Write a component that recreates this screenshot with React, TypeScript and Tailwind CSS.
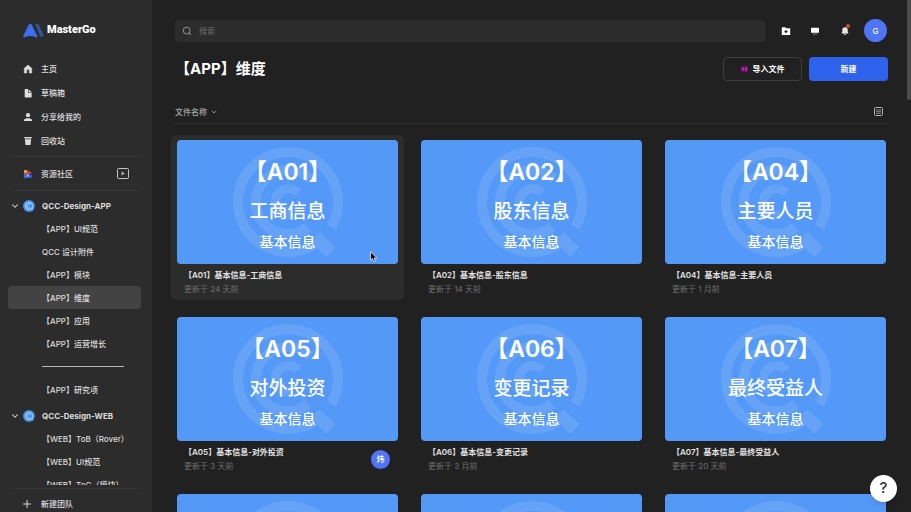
import React from "react";
import { ChevronDown, Plus, Search } from "lucide-react";

interface FileItem {
    code: string;
    name: string;
    updated: string;
    owner?: string;
    active?: boolean;
}

const files: FileItem[] = [
    { code: "A01", name: "工商信息", updated: "24 天前", active: true },
    { code: "A02", name: "股东信息", updated: "14 天前" },
    { code: "A04", name: "主要人员", updated: "1 月前" },
    { code: "A05", name: "对外投资", updated: "3 天前", owner: "炜" },
    { code: "A06", name: "变更记录", updated: "3 月前" },
    { code: "A07", name: "最终受益人", updated: "20 天前" },
];

// "-" renders as a separator line in the project list
const appProjects = ["【APP】UI规范", "QCC 设计附件", "【APP】模块", "【APP】维度", "【APP】应用", "【APP】运营增长", "-", "【APP】研究项"];
const webProjects = ["【WEB】ToB（Rover）", "【WEB】UI规范", "【WEB】ToC（模块）"];

const HomeIcon = () => (
    <svg viewBox="0 0 10 10" className="w-[10px] h-[10px]" fill="currentColor">
        <path d="M5 1 8.700 4.300V9H6.300V6.500A1.300 1.300 0 0 0 3.700 6.500V9H1.300V4.300Z" stroke="currentColor" strokeWidth=".6" strokeLinejoin="round" />
    </svg>
);

const DraftIcon = () => (
    <svg viewBox="0 0 10 10" className="w-[10px] h-[10px]" fill="currentColor">
        <path d="M2.200 1H5v3.600h3.700V9a.4.4 0 0 1-.4.4H2.200A.5.5 0 0 1 1.700 9V1.500a.5.5 0 0 1 .5-.5Z" />
        <path d="M5.600 1.200 8.500 4H5.600Z" />
    </svg>
);

const ShareIcon = () => (
    <svg viewBox="0 0 10 10" className="w-[10px] h-[10px]" fill="currentColor">
        <circle cx="5" cy="3.200" r="2.100" />
        <path d="M1 9V7.900C1 6.700 3.200 6.200 5 6.200s4 .5 4 1.700V9Z" />
    </svg>
);

const TrashIcon = () => (
    <svg viewBox="0 0 10 10" className="w-[10px] h-[10px]" fill="currentColor">
        <path d="M1.300 1h7.400v1.500H1.300Z" />
        <path d="M1.900 3.200h6.200L7.500 9H2.500Z" />
    </svg>
);

const CommunityIcon = () => (
    <svg viewBox="0 0 10 10" className="w-[10px] h-[10px]">
        <path d="M1 1h3.500v3.500H1Z" fill="#f0954a" />
        <path d="M3.500 1.500 8 3v3H4Z" fill="#e2452f" />
        <path d="M.8 5h3.500v4H.8Z" fill="#3f6df2" />
        <path d="M4.300 6.500A2.300 2.300 0 0 1 9 6.500V9H4.300Z" fill="#2853d8" />
        <path d="M4 4.500 7 7.500H4Z" fill="#f5b37a" />
    </svg>
);

const nav = [
    { label: "主页", icon: HomeIcon },
    { label: "草稿箱", icon: DraftIcon },
    { label: "分享给我的", icon: ShareIcon },
    { label: "回收站", icon: TrashIcon },
];

function Logo() {
    return (
        <a href="#" className="flex items-center gap-[2px] h-5">
            <svg viewBox="0 0 22 15" className="w-[22px] h-[15px]">
                <path d="M12.300 1.500C13 .4 15 .5 15.800 1.800L20.300 11.500c.7 1.800-1.500 2.900-3.200 1.700Z" fill="#2f569b" />
                <path d="M5.800 1.500C6.500.4 8 .4 8.700 1.500L14.300 13c.5 1-.4 1.700-1.400 1.300C9 12.600 5.600 12.600 1.700 14.300.7 14.700-.2 14 .3 13Z" fill="#3b6ff0" />
            </svg>
            <span className="text-[11px] leading-5 font-black text-white font-['Roboto',sans-serif]">MasterGo</span>
        </a>
    );
}

function TeamMark() {
    return (
        <svg viewBox="0 0 12 12" className="w-3 h-3 shrink-0">
            <circle cx="6" cy="6" r="6" fill="#3f8df0" />
            <circle cx="6" cy="6" r="3.700" fill="none" stroke="#b9d8ff" strokeWidth="1" />
            <path d="M7.500 4.700A2 2 0 1 0 7 7.800" fill="none" stroke="#d6e8ff" strokeWidth=".8" />
            <path d="m7.800 7.800 1.800 1.800" stroke="#b9d8ff" strokeWidth="1" />
        </svg>
    );
}

function Team({ name, projects, current }: { name: string; projects: string[]; current?: string }) {
    return (
        <section className="pt-1">
            <button className="flex items-center w-full h-[22px] pl-[10px]">
                <ChevronDown className="w-[10px] h-[10px] mr-[3px]" strokeWidth={2.500} />
                <TeamMark />
                <span className="ml-[7px] font-bold">{name}</span>
            </button>
            <ul>
                {projects.map((p) => (
                    <li key={p} className="h-[23px] pl-2 pr-[11px]">
                        {p === "-" ? (
                            <div className="flex items-center h-full pl-[34px]">
                                <hr className="w-[82px] border-[#b9b9b9]" />
                            </div>
                        ) : (
                            <a
                                href="#"
                                className={`flex items-center h-full pl-[34px] rounded whitespace-nowrap ${p === current ? "bg-[#434343]" : ""}`}
                            >
                                {p}
                            </a>
                        )}
                    </li>
                ))}
            </ul>
        </section>
    );
}

function Sidebar() {
    return (
        <aside className="flex flex-col w-[152px] shrink-0 bg-[#2c2c2c] text-[8px] font-medium text-[#dcdcdc]">
            <div className="pt-5 pl-[23px]">
                <Logo />
            </div>
            <nav className="mt-[17px] pb-[3px]">
                {nav.map(({ label, icon: Icon }) => (
                    <a key={label} href="#" className="flex items-center gap-2 h-6 pl-[23px]">
                        <Icon />
                        {label}
                    </a>
                ))}
            </nav>
            <hr className="mx-[13px] border-[#383838]" />
            <div className="flex items-center justify-between h-[33px] px-[23px]">
                <a href="#" className="flex items-center gap-2">
                    <CommunityIcon />
                    资源社区
                </a>
                <button aria-label="插件">
                    <svg viewBox="0 0 12 11" className="w-3 h-[11px]" fill="none" stroke="#c4c4c4">
                        <rect x=".5" y=".5" width="11" height="10" rx="1" />
                        <path d="M4.500 3.500 8 5.500 4.500 7.500Z" fill="#b0b0b0" stroke="none" />
                    </svg>
                </button>
            </div>
            <hr className="mx-[13px] border-[#383838]" />
            <div className="flex-1 min-h-0 overflow-hidden">
                <Team name="QCC-Design-APP" projects={appProjects} current="【APP】维度" />
                <Team name="QCC-Design-WEB" projects={webProjects} />
            </div>
            <div className="pt-[3px]">
                <hr className="mx-[13px] border-[#383838]" />
                <button className="flex items-center gap-2 h-[23px] pt-[6px] pl-[21px]">
                    <Plus className="w-3 h-3" strokeWidth={2} />
                    新建团队
                </button>
            </div>
        </aside>
    );
}

function Watermark() {
    return (
        <svg viewBox="0 0 120 120" className="absolute left-1/2 top-1/2 w-[120px] h-[120px] -translate-x-1/2 -translate-y-1/2 opacity-10" fill="none" stroke="#fff" strokeWidth="10">
            <path d="M86 102.700A50 50 0 1 1 103.300 85" />
            <path d="M82 37A32 32 0 1 0 80 85" />
            <path d="M70 51A13 13 0 1 0 65 72" strokeWidth="9" />
            <path d="m87 95 16 15" strokeWidth="13" />
        </svg>
    );
}

function Thumb({ file }: { file?: FileItem }) {
    return (
        <div className="relative h-[124px] rounded bg-[#5599f7] overflow-hidden text-white text-center font-medium">
            <Watermark />
            {file && (
                <div className="relative pt-[14px]">
                    <div className="text-[23px] leading-9 font-semibold">【{file.code}】</div>
                    <div className="mt-2 text-[19px] leading-7">{file.name}</div>
                    <div className="mt-1 text-[14px] leading-6">基本信息</div>
                </div>
            )}
        </div>
    );
}

function FileCard({ file }: { file: FileItem }) {
    return (
        <a href="#" className={`relative block h-[165px] px-[6px] pt-[5px] rounded-md ${file.active ? "bg-[#2c2c2c]" : ""}`}>
            <Thumb file={file} />
            <div className="flex items-center justify-between pl-[7px] pr-2 pt-1">
                <div>
                    <h2 className="text-[8px] leading-[14px] font-semibold text-[#e3e3e3]">
                        【{file.code}】基本信息-{file.name}
                    </h2>
                    <p className="text-[8px] leading-[14px] text-[#6f6f6f]">更新于 {file.updated}</p>
                </div>
                {file.owner && (
                    <span className="flex items-center justify-center w-[19px] h-[19px] rounded-full bg-[#4f74f5] text-[8px] font-medium text-white">
                        {file.owner}
                    </span>
                )}
            </div>
            {file.active && (
                <svg viewBox="0 0 8 12" className="absolute left-[199px] top-[116px] w-2 h-3">
                    <path d="M.6.8v8.400l1.900-1.700 1.300 3.200 1.500-.6L4 7h2.800Z" fill="#000" stroke="#fff" strokeWidth=".7" />
                </svg>
            )}
        </a>
    );
}

function Header() {
    return (
        <header className="flex items-center h-[23px] pr-px text-white">
            <label className="flex items-center flex-1 h-[22px] pl-[7px] gap-[7px] rounded bg-[#2c2c2c] text-[#8a8a8a]">
                <Search className="w-[10px] h-[10px]" strokeWidth={2.500} />
                <input aria-label="搜索" placeholder="搜索" className="flex-1 text-[8px] outline-none placeholder:text-[#6c6c6c]" />
            </label>
            <div className="flex items-center ml-[15px]">
                <button aria-label="新建文件夹" className="px-px">
                    <svg viewBox="0 0 10 10" className="w-[10px] h-[10px]">
                        <path d="M.800 1.200h3.400l1 1.100h4v6.700H.800Z" fill="#fff" />
                        <path d="M5 4v3.200M3.400 5.600h3.200" stroke="#222" strokeWidth="1.100" />
                    </svg>
                </button>
                <button aria-label="桌面端" className="ml-[18px]">
                    <svg viewBox="0 0 10 10" className="w-[10px] h-[10px]">
                        <rect x="1" y="1.800" width="8" height="5" rx=".4" fill="#fff" />
                        <path d="M2.800 8h4.400" stroke="#888" strokeWidth="1" />
                    </svg>
                </button>
                <button aria-label="通知" className="relative ml-5">
                    <svg viewBox="0 0 10 10" className="w-[10px] h-[10px]" fill="#e8e8e8">
                        <path d="M5 1.200a2.700 2.700 0 0 0-2.700 2.700v1.900L1.400 7.500h7.200l-.9-1.700V3.900A2.700 2.700 0 0 0 5 1.200ZM3.900 8h2.200a1.100 1.100 0 0 1-2.200 0Z" />
                    </svg>
                    <span className="absolute right-0 -top-0.5 w-1 h-1 rounded-full bg-[#d8492f]" />
                </button>
                <button className="ml-[14px] w-[23px] h-[23px] rounded-full bg-[#4f74f5] text-[8px] font-medium">G</button>
            </div>
        </header>
    );
}

export default function App() {
    return (
        <div className="relative flex h-screen overflow-hidden bg-[#212121] font-['Inter','Noto_Sans_CJK_SC',sans-serif] text-white">
            <Sidebar />
            <main className="flex-1 min-w-0 overflow-hidden pt-[19px]">
                <div className="px-[23px]">
                    <Header />
                    <div className="flex items-center gap-[7px] mt-[15px]">
                        <h1 className="flex-1 text-[15px] leading-6 font-bold">【APP】维度</h1>
                        <button className="flex items-center justify-center gap-[5px] w-[79px] h-6 rounded border border-[#3d3d3d] text-[8px] font-bold">
                            <svg viewBox="0 0 7 6" className="w-[7px] h-[6px]">
                                <rect width="7" height="6" rx=".5" fill="#6b0a62" />
                                <path d="m1 1.500 2 3m0-3-2 3M5.700 1.200v3.300H4.900a1 1 0 0 1 0-1.900h.8" fill="none" stroke="#e04fd0" strokeWidth=".7" />
                            </svg>
                            导入文件
                        </button>
                        <button className="w-[79px] h-6 rounded bg-[#2f62ec] text-[8px] font-bold">新建</button>
                    </div>
                    <div className="flex items-center justify-between h-6 mt-[19px] pr-[5px] border-b border-[#2e2e2e]">
                        <button className="flex items-center gap-[3px] text-[8px] font-medium text-[#a6a6a6]">
                            文件名称
                            <ChevronDown className="w-2 h-2" strokeWidth={2.500} />
                        </button>
                        <button aria-label="列表视图">
                            <svg viewBox="0 0 9 9" className="w-[9px] h-[9px]" fill="none" stroke="#b0b0b0">
                                <rect x=".5" y=".5" width="8" height="8" rx="1" />
                                <path d="M2 3h5M2 4.700h5M2 6.300h5" strokeWidth=".7" />
                            </svg>
                        </button>
                    </div>
                </div>
                <div className="grid grid-cols-3 gap-x-[11px] gap-y-3 px-[19px] mt-[11px]">
                    {files.map((file) => (
                        <FileCard key={file.code} file={file} />
                    ))}
                    {[0, 1, 2].map((i) => (
                        <div key={i} className="px-[6px] pt-[5px]">
                            <Thumb />
                        </div>
                    ))}
                </div>
            </main>
            <div className="absolute right-0 top-0 w-1 h-[100px] rounded-b bg-[#4d4d4d]" />
            <button className="absolute right-[14px] bottom-[10px] w-[27px] h-[27px] rounded-full bg-white text-[15px] font-medium text-[#333] shadow-md">
                ?
            </button>
        </div>
    );
}
